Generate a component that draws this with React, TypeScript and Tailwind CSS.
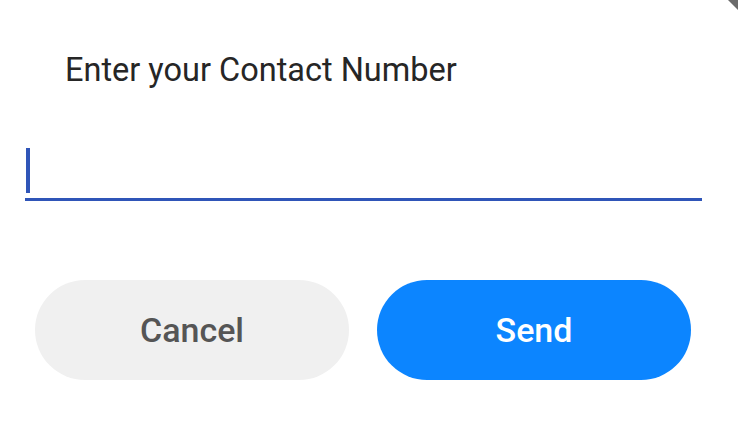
import React from 'react';

export default function App() {
  return (
    <div className="relative w-[738px] h-[438px] bg-white overflow-hidden" style={{ fontFamily: 'Roboto, "Noto Sans", sans-serif' }}>
      {/* corner shadow of the window behind */}
      <svg className="absolute top-0 right-0" width="12" height="10" viewBox="0 0 12 10">
        <polygon points="2,0 12,0 12,10" fill="#6b6b6b" />
      </svg>

      <div className="pt-[52px] pl-[65px]">
        <div className="text-[32.5px] text-[#262626] leading-[36px]">Enter your Contact Number</div>
      </div>

      {/* input */}
      <div className="mt-[60px] ml-[25px] w-[677px] h-[53px] border-b-[3px] border-[#2f55b8] flex items-start pl-[1px]">
        <div className="w-[4px] h-[45px] bg-[#2f55b8]" />
      </div>

      {/* buttons */}
      <div className="mt-[79px] pl-[35px] flex gap-[28px]">
        <button className="w-[314px] h-[100px] rounded-full bg-[#f0f0f0] text-[#555555] text-[34px] font-medium">
          Cancel
        </button>
        <button className="w-[314px] h-[100px] rounded-full bg-[#0c85ff] text-white text-[34px] font-medium">
          Send
        </button>
      </div>
    </div>
  );
}
